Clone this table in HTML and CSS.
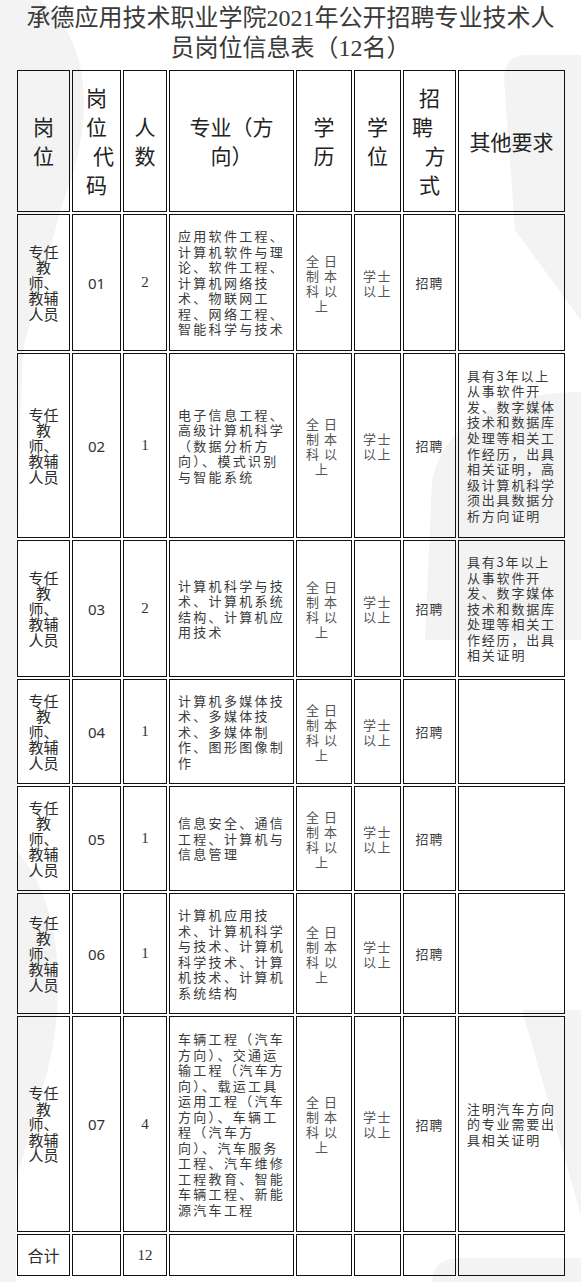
FILE: index.html
```html
<!DOCTYPE html>
<html lang="zh-CN">
<head>
<meta charset="utf-8">
<title>承德应用技术职业学院2021年公开招聘专业技术人员岗位信息表</title>
<link rel="stylesheet" href="styles.css">
</head>
<body>
<div class="watermark" aria-hidden="true">
  <svg width="581" height="1282" viewBox="0 0 581 1282">
    <path class="wm" d="M0 0 H40 C92 40 96 120 62 205 L24 345 C18 420 16 600 16 1282 H0 Z"/>
    <path class="wm" d="M16 850 C62 900 70 1000 42 1090 L16 1180 Z"/>
    <path class="wm" d="M581 55 H526 Q504 55 504 80 L515 230 L581 320 Z"/>
    <path class="wm" d="M581 392 C505 392 445 420 432 480 L425 640 L581 640 Z"/>
    <path class="wm" d="M522 1010 L581 1010 L581 1215 Z"/>
    <path class="wm" d="M581 1258 H462 Q432 1258 432 1282 H581 Z"/>
  </svg>
</div>

<h1 class="title">承德应用技术职业学院2021年公开招聘专业技术人<br>员岗位信息表（12名）</h1>

<div class="sheet">
  <div class="cell hd"><div>岗<br>位</div></div>
  <div class="cell hd"><div>岗<br>位<br><span class="sh-r">代</span><br>码</div></div>
  <div class="cell hd"><div>人<br>数</div></div>
  <div class="cell hd"><div>专业（方<br>向）</div></div>
  <div class="cell hd"><div>学<br>历</div></div>
  <div class="cell hd"><div>学<br>位</div></div>
  <div class="cell hd"><div>招<br><span class="sh-l">聘</span><br><span class="sh-r2">方</span><br>式</div></div>
  <div class="cell hd"><div>其他要求</div></div>

  <div class="cell pos"><div>专任<br>教<br>师、<br>教辅<br>人员</div></div>
  <div class="cell code">01</div>
  <div class="cell num">2</div>
  <div class="cell major"><div>应用软件工程、<br>计算机软件与理<br>论、软件工程、<br>计算机网络技<br>术、物联网工<br>程、网络工程、<br>智能科学与技术</div></div>
  <div class="cell edu"><div>全日<br>制本<br>科以<br>上</div></div>
  <div class="cell deg"><div>学士<br>以上</div></div>
  <div class="cell way">招聘</div>
  <div class="cell req"></div>

  <div class="cell pos"><div>专任<br>教<br>师、<br>教辅<br>人员</div></div>
  <div class="cell code">02</div>
  <div class="cell num">1</div>
  <div class="cell major"><div>电子信息工程、<br>高级计算机科学<br>（数据分析方<br>向）、模式识别<br>与智能系统</div></div>
  <div class="cell edu"><div>全日<br>制本<br>科以<br>上</div></div>
  <div class="cell deg"><div>学士<br>以上</div></div>
  <div class="cell way">招聘</div>
  <div class="cell req"><div>具有3年以上<br>从事软件开<br>发、数字媒体<br>技术和数据库<br>处理等相关工<br>作经历，出具<br>相关证明，高<br>级计算机科学<br>须出具数据分<br>析方向证明</div></div>

  <div class="cell pos"><div>专任<br>教<br>师、<br>教辅<br>人员</div></div>
  <div class="cell code">03</div>
  <div class="cell num">2</div>
  <div class="cell major"><div>计算机科学与技<br>术、计算机系统<br>结构、计算机应<br>用技术</div></div>
  <div class="cell edu"><div>全日<br>制本<br>科以<br>上</div></div>
  <div class="cell deg"><div>学士<br>以上</div></div>
  <div class="cell way">招聘</div>
  <div class="cell req"><div>具有3年以上<br>从事软件开<br>发、数字媒体<br>技术和数据库<br>处理等相关工<br>作经历，出具<br>相关证明</div></div>

  <div class="cell pos"><div>专任<br>教<br>师、<br>教辅<br>人员</div></div>
  <div class="cell code">04</div>
  <div class="cell num">1</div>
  <div class="cell major"><div>计算机多媒体技<br>术、多媒体技<br>术、多媒体制<br>作、图形图像制<br>作</div></div>
  <div class="cell edu"><div>全日<br>制本<br>科以<br>上</div></div>
  <div class="cell deg"><div>学士<br>以上</div></div>
  <div class="cell way">招聘</div>
  <div class="cell req"></div>

  <div class="cell pos"><div>专任<br>教<br>师、<br>教辅<br>人员</div></div>
  <div class="cell code">05</div>
  <div class="cell num">1</div>
  <div class="cell major"><div>信息安全、通信<br>工程、计算机与<br>信息管理</div></div>
  <div class="cell edu"><div>全日<br>制本<br>科以<br>上</div></div>
  <div class="cell deg"><div>学士<br>以上</div></div>
  <div class="cell way">招聘</div>
  <div class="cell req"></div>

  <div class="cell pos"><div>专任<br>教<br>师、<br>教辅<br>人员</div></div>
  <div class="cell code">06</div>
  <div class="cell num">1</div>
  <div class="cell major"><div>计算机应用技<br>术、计算机科学<br>与技术、计算机<br>科学技术、计算<br>机技术、计算机<br>系统结构</div></div>
  <div class="cell edu"><div>全日<br>制本<br>科以<br>上</div></div>
  <div class="cell deg"><div>学士<br>以上</div></div>
  <div class="cell way">招聘</div>
  <div class="cell req"></div>

  <div class="cell pos"><div>专任<br>教<br>师、<br>教辅<br>人员</div></div>
  <div class="cell code">07</div>
  <div class="cell num">4</div>
  <div class="cell major"><div>车辆工程（汽车<br>方向）、交通运<br>输工程（汽车方<br>向）、载运工具<br>运用工程（汽车<br>方向）、车辆工<br>程（汽车方<br>向）、汽车服务<br>工程、汽车维修<br>工程教育、智能<br>车辆工程、新能<br>源汽车工程</div></div>
  <div class="cell edu"><div>全日<br>制本<br>科以<br>上</div></div>
  <div class="cell deg"><div>学士<br>以上</div></div>
  <div class="cell way">招聘</div>
  <div class="cell req"><div>注明汽车方向<br>的专业需要出<br>具相关证明</div></div>

  <div class="cell total">合计</div>
  <div class="cell"></div>
  <div class="cell num">12</div>
  <div class="cell"></div>
  <div class="cell"></div>
  <div class="cell"></div>
  <div class="cell"></div>
  <div class="cell"></div>
</div>
</body>
</html>
```

FILE: styles.css
```css
html, body {
  margin: 0;
  padding: 0;
  background: #ffffff;
}

body {
  position: relative;
  width: 581px;
  min-height: 1282px;
  font-family: "Noto Sans CJK SC", sans-serif;
  color: #333333;
}

.watermark {
  position: absolute;
  left: 0;
  top: 0;
  width: 581px;
  height: 1282px;
  z-index: 0;
  overflow: hidden;
}

.watermark svg {
  display: block;
}

.wm {
  fill: #f3f3f3;
}

.title {
  position: relative;
  z-index: 1;
  margin: 0;
  padding-top: 3px;
  height: 64px;
  font-family: "Liberation Serif", "Noto Sans CJK SC", serif;
  font-weight: 400;
  font-size: 24px;
  line-height: 30px;
  text-align: center;
  color: #3a3a3a;
}

.sheet {
  position: relative;
  z-index: 1;
  margin: 3px 0 0 17px;
  display: grid;
  grid-template-columns: 53px 49px 44px 125px 56px 47px 53px 107px;
  grid-template-rows: 142px 137px 185px 137px 105px 105px 121px 216px 42px;
  gap: 2px;
  width: max-content;
}

.cell {
  box-sizing: border-box;
  border: 1px solid #111111;
  display: flex;
  align-items: center;
  justify-content: center;
  text-align: center;
  color: #333333;
}

.hd {
  font-size: 21px;
  line-height: 29px;
  color: #222222;
}

.sh-r { padding-left: 14px; }
.sh-l { padding-right: 14px; }
.sh-r2 { padding-left: 11px; }

.pos {
  font-size: 15px;
  line-height: 15.5px;
  color: #2b2b2b;
}

.code {
  font-family: "Noto Sans", sans-serif;
  font-size: 15px;
  color: #333333;
}

.num {
  font-family: "Liberation Serif", serif;
  font-size: 15px;
  color: #333333;
}

.major {
  justify-content: flex-start;
  text-align: left;
  padding-left: 8px;
  font-size: 13px;
  line-height: 15.5px;
  letter-spacing: 2.3px;
  white-space: nowrap;
  color: #3a3a3a;
}

.edu {
  font-size: 13px;
  line-height: 15px;
  letter-spacing: 5px;
  color: #555555;
}

.deg {
  font-size: 13px;
  line-height: 15px;
  letter-spacing: 1.5px;
  color: #555555;
}

.way {
  font-size: 13px;
  letter-spacing: 1px;
  color: #3a3a3a;
}

.req {
  justify-content: flex-start;
  text-align: left;
  padding-left: 8px;
  font-size: 13px;
  line-height: 15.6px;
  letter-spacing: 1.8px;
  white-space: nowrap;
  color: #3a3a3a;
}

.total {
  font-size: 16px;
  color: #2b2b2b;
}
```
